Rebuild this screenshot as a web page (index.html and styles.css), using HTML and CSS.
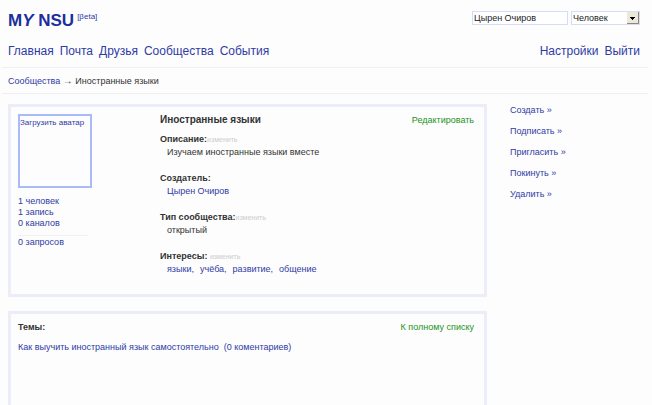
FILE: index.html
```html
<!DOCTYPE html>
<html lang="ru">
<head>
<meta charset="utf-8">
<meta name="viewport" content="width=device-width, initial-scale=1">
<title>MY NSU</title>
<link rel="stylesheet" href="styles.css">
</head>
<body>
<header class="header">
  <div class="topbar">
    <a class="logo" href="#">M<i>Y</i> NSU</a>
    <a class="beta" href="#">[βeta]</a>
    <form class="search">
      <input class="field" type="text" value="Цырен Очиров" aria-label="Поиск">
      <span class="picker">
        <select class="field" aria-label="Что искать">
          <option>Человек</option>
          <option>Сообщество</option>
        </select>
        <svg class="arrow" width="12" height="12" viewBox="0 0 12 12" aria-hidden="true">
          <path fill="#ece9d8" d="M0 0h12v12H0z"/>
          <path fill="#8d897b" d="M11 0h1v12H0v-1h11z"/>
          <path fill="#000" d="M3 5h5v1H7v1H6v1H5V7H4V6H3z"/>
        </svg>
      </span>
    </form>
  </div>
  <nav class="nav">
    <a href="#">Главная</a>
    <a href="#">Почта</a>
    <a href="#">Друзья</a>
    <a href="#">Сообщества</a>
    <a href="#">События</a>
    <a class="push" href="#">Настройки</a>
    <a href="#">Выйти</a>
  </nav>
</header>
<nav class="crumbs"><a href="#">Сообщества</a> <span class="sep">→</span> Иностранные языки</nav>
<div class="columns">
  <main class="main">
    <section class="panel profile">
      <aside class="side">
        <a class="avatar" href="#">Загрузить аватар</a>
        <ul class="stats">
          <li><a href="#">1 человек</a></li>
          <li><a href="#">1 запись</a></li>
          <li><a href="#">0 каналов</a></li>
        </ul>
        <a class="requests" href="#">0 запросов</a>
      </aside>
      <div class="info">
        <div class="bar">
          <h1>Иностранные языки</h1>
          <a class="action" href="#">Редактировать</a>
        </div>
        <dl>
          <dt>Описание:<a class="change" href="#">изменить</a></dt>
          <dd>Изучаем иностранные языки вместе</dd>
          <dt>Создатель:</dt>
          <dd><a href="#">Цырен Очиров</a></dd>
          <dt>Тип сообщества:<a class="change" href="#">изменить</a></dt>
          <dd>открытый</dd>
          <dt>Интересы: <a class="change" href="#">изменить</a></dt>
          <dd class="tags"><a href="#">языки,</a><a href="#">учёба,</a><a href="#">развитие,</a><a href="#">общение</a></dd>
        </dl>
      </div>
    </section>
    <section class="panel topics">
      <div class="bar">
        <h2>Темы:</h2>
        <a class="action" href="#">К полному списку</a>
      </div>
      <p class="topic"><a href="#">Как выучить иностранный язык самостоятельно</a><a href="#">(0 коментариев)</a></p>
    </section>
  </main>
  <nav class="menu">
    <a href="#">Создать »</a>
    <a href="#">Подписать »</a>
    <a href="#">Пригласить »</a>
    <a href="#">Покинуть »</a>
    <a href="#">Удалить »</a>
  </nav>
</div>
</body>
</html>
```
FILE: styles.css
```css
* {
  box-sizing: border-box;
}

body {
  display: flex;
  flex-direction: column;
  min-height: 100vh;
  margin: 0;
  background: #fdfdfd;
  color: #333;
  font: 9px/12px "Liberation Sans", Arial, sans-serif;
}

a {
  color: #2f3ba5;
  text-decoration: none;
}

h1, h2, dl, dd, ul, p {
  margin: 0;
  padding: 0;
}

.header {
  margin: 0 4px 0 2px;
  padding: 11px 8px 8px 6px;
  border-bottom: 1px solid #f0f0f2;
}

.topbar {
  display: flex;
  align-items: flex-start;
  gap: 3px;
}

.logo {
  color: #1c2f9c;
  font-size: 17px;
  font-weight: bold;
  line-height: 20px;
}

.beta {
  font-size: 8px;
  line-height: 11px;
}

.search {
  display: flex;
  gap: 3px;
  margin-left: auto;
}

.field {
  width: 96px;
  height: 14px;
  padding: 0 1px;
  border: 1px solid #d5dcf5;
  border-radius: 0;
  background: #fff;
  color: #222;
  font: inherit;
  appearance: none;
}

.picker {
  position: relative;
  display: flex;
}

.picker .field {
  width: 69px;
}

.arrow {
  position: absolute;
  top: 1px;
  right: 1px;
  pointer-events: none;
}

.nav {
  display: flex;
  gap: 6px;
  margin-top: 12px;
  font-size: 12px;
  line-height: 16px;
}

.push {
  margin-left: auto;
}

.crumbs {
  margin: 0 4px 0 2px;
  padding: 7px 6px 6px;
  border-bottom: 1px solid #f0f0f2;
}

.sep {
  font-size: 10px;
}

.columns {
  display: flex;
  flex: 1;
  gap: 23px;
  padding: 10px 12px 0 8px;
}

.main {
  display: flex;
  flex: 1;
  flex-direction: column;
  gap: 14px;
}

.panel {
  padding: 7px 10px 7px 7px;
  border: 3px solid #ebeef8;
}

.profile {
  display: flex;
  gap: 68px;
  min-height: 193px;
}

.side {
  width: 74px;
}

.avatar {
  display: block;
  height: 74px;
  padding: 1px 0;
  border: 2px solid #aabbf9;
  font-size: 8px;
  white-space: nowrap;
}

.stats {
  margin: 8px 4px 0 0;
  padding-bottom: 6px;
  border-bottom: 1px solid #f0f0f2;
  line-height: 11px;
  list-style: none;
}

.info {
  flex: 1;
}

.bar {
  display: flex;
  justify-content: space-between;
}

h1 {
  font-size: 10px;
}

h2 {
  font-size: 9px;
}

.action {
  color: #229322;
}

dl {
  margin-top: 7px;
  line-height: 13px;
}

dt {
  font-weight: bold;
}

dd {
  margin: 0 0 13px 7px;
}

dd:last-child {
  margin-bottom: 0;
}

.change {
  color: #ccc;
  font-size: 7px;
  font-weight: normal;
}

.tags {
  display: flex;
  gap: 6px;
}

.topics {
  flex: 1;
  border-bottom: 0;
}

.topic {
  display: flex;
  gap: 5px;
  margin-top: 8px;
}

.menu {
  display: flex;
  flex-direction: column;
  gap: 9px;
  width: 130px;
}
```
